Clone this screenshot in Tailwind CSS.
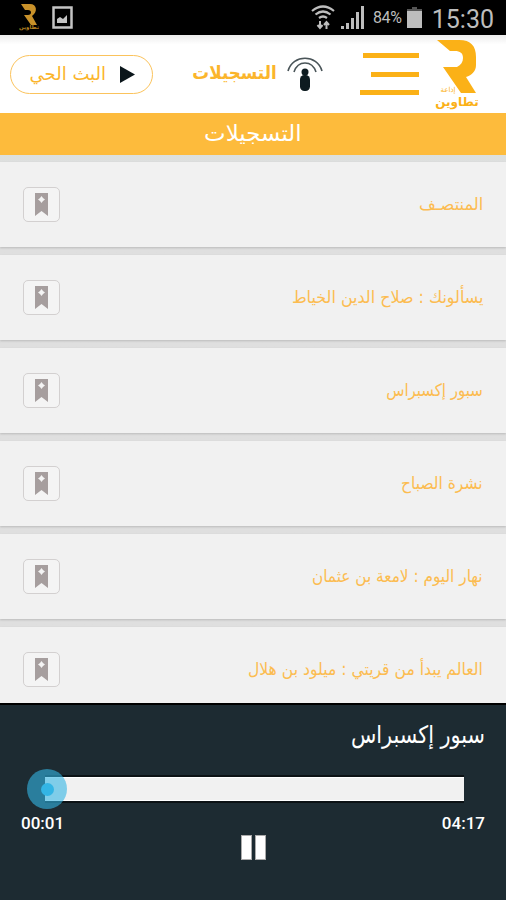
<!DOCTYPE html>
<html lang="ar">
<head>
    <meta charset="UTF-8">
    <meta name="viewport" content="width=device-width, initial-scale=1.0">
    <title>التسجيلات</title>
    <script src="https://cdn.jsdelivr.net/npm/@tailwindcss/browser@4"></script>
</head>
<body class="w-[506px] h-[900px] overflow-hidden flex flex-col bg-[#dfdfdf] font-['DejaVu_Sans',sans-serif]">

    <!-- Status bar -->
    <div class="h-[35px] shrink-0 bg-black flex items-center justify-between pl-[18px] pr-3">
        <div class="flex items-center gap-[12px]">
            <svg class="w-[22px] h-[33px]" viewBox="0 0 22 33">
                <path d="M3 3h9c7 0 8 8 2 12l5 9h-6L6 14h4c4 0 4-5 0-5H7z" fill="#c8912a"/>
                <text x="11" y="28" text-anchor="middle" font-size="5.500" font-weight="bold" fill="#b88422">تطاوين</text>
            </svg>
            <svg class="w-[21px] h-[24px]" viewBox="0 0 21 24">
                <rect x="1.5" y="1.5" width="18" height="20" fill="none" stroke="#c4c4c4" stroke-width="2.500"/>
                <path d="M5 17v-4l3-2 3 2 4-4v8z" fill="#c4c4c4"/>
            </svg>
        </div>
        <div class="flex items-center font-[Roboto,sans-serif] text-[#bdbdbd]">
            <svg class="w-[24px] h-[25px] mr-[6px]" viewBox="0 0 24 25" fill="none" stroke="#bdbdbd">
                <path d="M1 6q11-9 22 0M4.500 9.500q7.500-6 15 0M8 13q4-3 8 0" stroke-width="2.200"/>
                <path d="M9 16v7M6.500 20l2.500 3 2.500-3M15.500 24v-7M13 20l2.500-3 2.500 3" stroke-width="2"/>
            </svg>
            <svg class="w-[23px] h-[23px] mr-[9px]" viewBox="0 0 23 23" fill="#bdbdbd">
                <path d="M0 20h3v3H0zM5 17h3v6H5zM10 12h3v11h-3zM15 6h3v17h-3zM20 0h3v23h-3z"/>
            </svg>
            <span class="text-[16px] mr-[5px] tracking-[-0.3px]">84%</span>
            <svg class="w-[15px] h-[21px] mr-[10px]" viewBox="0 0 15 21">
                <path d="M5 0h5v2h5v3H0V2h5z" fill="#555"/>
                <path d="M0 4h15v17H0z" fill="#bdbdbd"/>
            </svg>
            <span class="text-[25px] leading-none pt-[3px]">15:30</span>
        </div>
    </div>

    <!-- Header -->
    <div class="h-[78px] shrink-0 bg-linear-to-b from-[#ececec] to-white to-12% flex items-start pl-[10px] text-[#fbb52b]">
        <div class="mt-5 w-[143px] h-[39px] shrink-0 rounded-full border-[1.500px] border-[#fbc35c] flex items-center justify-end pr-[17px] gap-[14px]">
            <span dir="rtl" class="text-[18px] leading-none whitespace-nowrap pb-[2px]">البث الحي</span>
            <svg class="w-[15px] h-[17px]" viewBox="0 0 15 17"><path d="M0 0l15 8.500L0 17z" fill="#0b161b"/></svg>
        </div>
        <div class="mt-5 w-[170px] h-[39px] flex items-center justify-end gap-[8px]">
            <span dir="rtl" class="origin-right scale-x-[0.93] text-[18px] font-bold leading-none whitespace-nowrap pb-1">التسجيلات</span>
            <svg class="w-[38px] h-[37px]" viewBox="0 0 38 37" fill="none">
                <path d="M3 15C8-2 32-2 37 15" stroke="#4a5559" stroke-width="1.600"/>
                <path d="M9 16C13 4 27 4 31 16" stroke="#4a5559" stroke-width="1.600"/>
                <circle cx="20" cy="16" r="3.500" fill="#0d1b20"/>
                <rect x="15" y="19" width="10" height="16" rx="4.500" fill="#0d1b20"/>
            </svg>
        </div>
        <div class="ml-[37px] mt-[18px] w-[59px] flex flex-col items-end">
            <div class="h-[5px] w-[56px] bg-[#fbb117]"></div>
            <div class="h-[5px] w-[48px] mt-[14px] bg-[#fbb117]"></div>
            <div class="h-[5px] w-[59px] mt-[13px] bg-[#fbb117]"></div>
        </div>
        <svg class="ml-[14px] mt-1 w-[50px] h-[74px]" viewBox="-2 0 50 74">
            <path d="M2 1H24C36 1 41 7 41 18V26C41 32 37 36 31 38L41 54H26L8 28H22C26 26 28 23 28 19C28 14 25 12 20 12H15Z" fill="#fbb117"/>
            <text x="13" y="53" text-anchor="middle" font-size="7" fill="#fbb117">إذاعة</text>
            <text x="22" y="67" text-anchor="middle" font-size="12" font-weight="bold" fill="#fbb117">تطاوين</text>
        </svg>
    </div>

    <!-- Page title -->
    <div class="h-[42px] shrink-0 bg-[#fdbb3c] flex items-center justify-center text-white text-[22px] pb-[2px]">
        <span dir="rtl" class="scale-x-[1.04]">التسجيلات</span>
    </div>

    <!-- Recordings, filled in below -->
    <div id="recordings" class="h-[548px] shrink-0 overflow-hidden pt-[7px] flex flex-col gap-[8px] bg-linear-to-b from-[#dce0de] to-[#dfdfdf] to-2%"></div>

    <!-- Player -->
    <div class="h-[197px] shrink-0 bg-[#1d2b32] border-t-2 border-black text-white">
        <div dir="rtl" class="h-[72px] pt-[14px] pr-[21px] text-[24px] leading-[32px]">
            <span class="inline-block origin-right scale-x-[0.865] whitespace-nowrap">سبور إكسبراس</span>
        </div>
        <div class="ml-[45px] w-[419px] h-[24px] bg-[#f1f1f1] border-y border-white shadow-[0_-2px_0_#0c1215,0_2px_0_#0c1215] relative">
            <div class="absolute -left-[18px] -top-[9px] size-[40px] rounded-full bg-[#33b5e5]/60 flex items-center justify-center">
                <div class="size-[13px] rounded-full bg-[#33b5e5]"></div>
            </div>
        </div>
        <div class="flex justify-between px-[21px] mt-[9px] font-[Roboto,sans-serif] font-medium text-[17px] leading-[26px]">
            <span>00:01</span>
            <span>04:17</span>
        </div>
        <div class="flex gap-[3px] ml-[241px] -mt-[1px]">
            <div class="w-[11px] h-[25px] bg-white border border-[#aaa]"></div>
            <div class="w-[11px] h-[25px] bg-white border border-[#aaa]"></div>
        </div>
    </div>

    <script>
        const recordings = [
            { title: 'المنتصـف', scale: 'scale-x-[0.955]' },
            { title: 'يسألونك : صلاح الدين الخياط', scale: 'scale-x-[0.937]' },
            { title: 'سبور إكسبراس', scale: 'scale-x-[0.88]' },
            { title: 'نشرة الصباح', scale: 'scale-x-[0.91]' },
            { title: 'نهار اليوم : لامعة بن عثمان', scale: 'scale-x-[0.9]' },
            { title: 'العالم يبدأ من قريتي : ميلود بن هلال', scale: 'scale-x-[0.918]' }
        ];

        document.getElementById('recordings').innerHTML = recordings.map(item => `
            <div class="h-[85px] shrink-0 bg-[#f1f1f1] shadow-[0_1px_2px_#bbbbbb] flex items-center justify-between px-[23px]">
                <div class="w-[37px] h-[35px] rounded-[5px] border-[1.500px] border-[#d3d0d0] bg-[#f4f4f4] flex items-center justify-center">
                    <svg class="w-[13px] h-[23px]" viewBox="0 0 13 23">
                        <path d="M0 0h13v23l-6.500-5L0 23z" fill="#a69e9e"/>
                        <path d="M6.500 3l1.500 2 2 1.500-2 1.500-1.500 2L5 8 3 6.500 5 5z" fill="#f4f4f4"/>
                    </svg>
                </div>
                <span dir="rtl" class="${item.scale} origin-right text-[17px] leading-none text-[#fcbc50] whitespace-nowrap">${item.title}</span>
            </div>`).join('');
    </script>
</body>
</html>
